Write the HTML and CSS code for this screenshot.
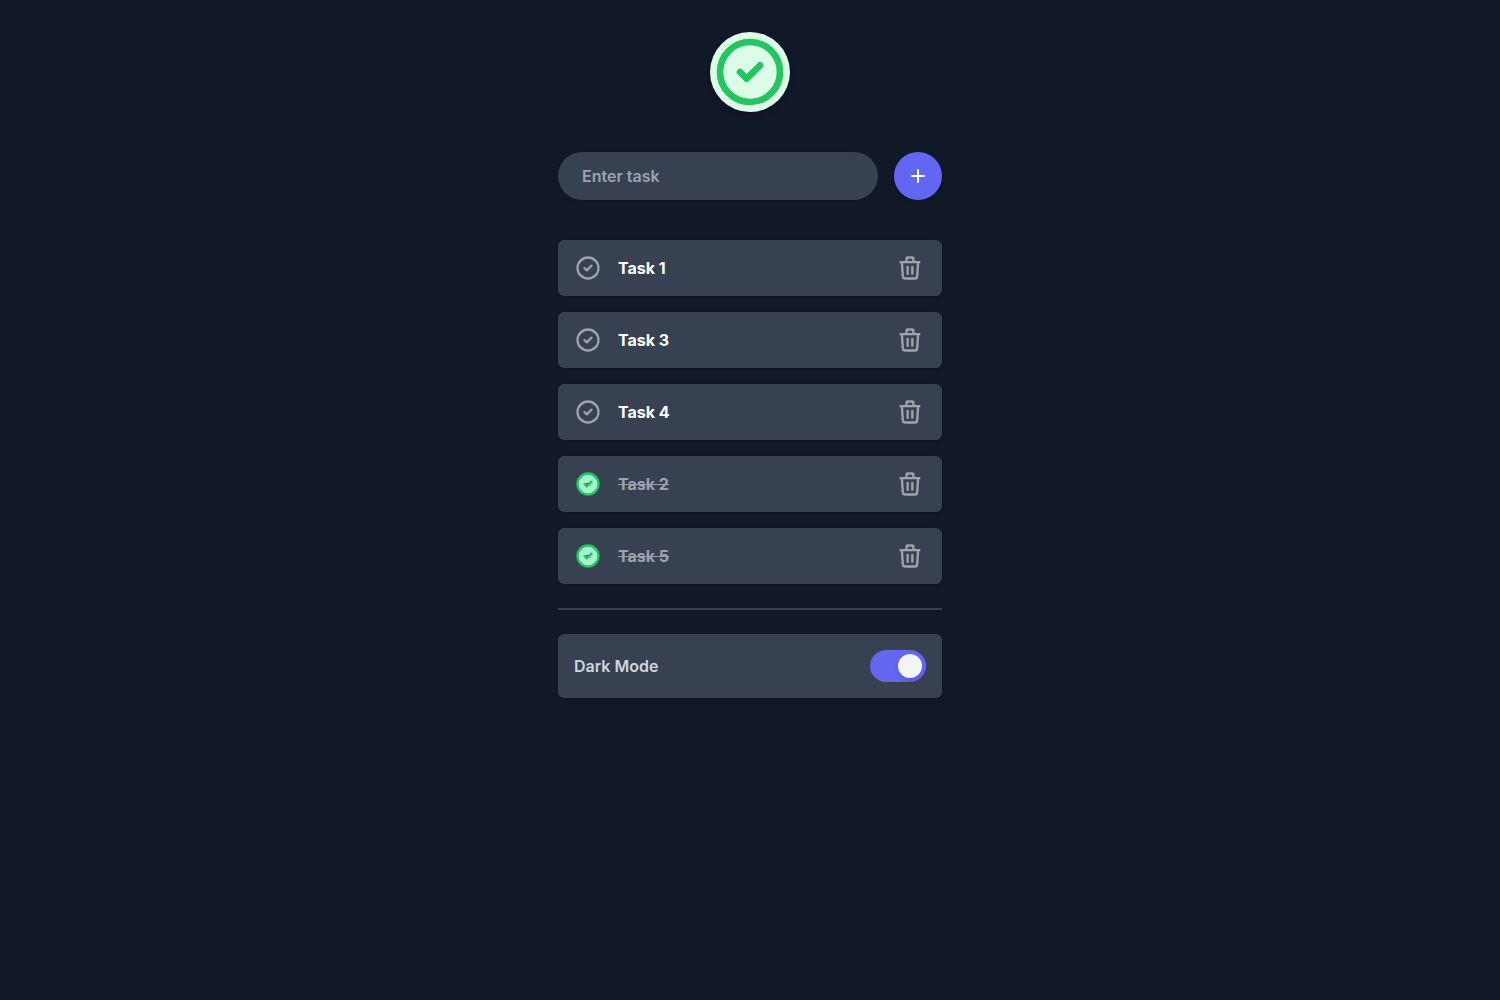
FILE: index.html
```html
<!DOCTYPE html>
<html lang="en">
<head>
<meta charset="utf-8">
<meta name="viewport" content="width=device-width, initial-scale=1">
<title>Tasks</title>
<link rel="stylesheet" href="styles.css">
</head>
<body>
<svg class="sprite" aria-hidden="true">
  <symbol id="check" viewBox="0 0 24 24"><path d="M9 12l2 2 4-4m6 2a9 9 0 11-18 0 9 9 0 0118 0z"/></symbol>
  <symbol id="trash" viewBox="0 0 24 24"><path d="M19 7l-.867 12.142A2 2 0 0116.138 21H7.862a2 2 0 01-1.995-1.858L5 7m5 4v6m4-6v6m1-10V4a1 1 0 00-1-1h-4a1 1 0 00-1 1v3M4 7h16"/></symbol>
</svg>
<main class="app">
  <header class="logo"><svg class="icon"><use href="#check"/></svg></header>
  <form class="new-task">
    <input class="task-input" type="text" placeholder="Enter task" aria-label="Enter task">
    <button class="add" type="button" aria-label="Add task">
      <svg class="plus" viewBox="0 0 20 20"><path d="M10 4v12M4 10h12"/></svg>
    </button>
  </form>
  <ul class="tasks">
    <li class="card task">
      <button class="toggle" type="button" aria-label="Complete Task 1"><svg class="icon"><use href="#check"/></svg></button>
      <span class="name">Task 1</span>
      <button class="delete" type="button" aria-label="Delete Task 1"><svg class="icon"><use href="#trash"/></svg></button>
    </li>
    <li class="card task">
      <button class="toggle" type="button" aria-label="Complete Task 3"><svg class="icon"><use href="#check"/></svg></button>
      <span class="name">Task 3</span>
      <button class="delete" type="button" aria-label="Delete Task 3"><svg class="icon"><use href="#trash"/></svg></button>
    </li>
    <li class="card task">
      <button class="toggle" type="button" aria-label="Complete Task 4"><svg class="icon"><use href="#check"/></svg></button>
      <span class="name">Task 4</span>
      <button class="delete" type="button" aria-label="Delete Task 4"><svg class="icon"><use href="#trash"/></svg></button>
    </li>
    <li class="card task done">
      <button class="toggle" type="button" aria-label="Reopen Task 2"><svg class="icon"><use href="#check"/></svg></button>
      <span class="name">Task 2</span>
      <button class="delete" type="button" aria-label="Delete Task 2"><svg class="icon"><use href="#trash"/></svg></button>
    </li>
    <li class="card task done">
      <button class="toggle" type="button" aria-label="Reopen Task 5"><svg class="icon"><use href="#check"/></svg></button>
      <span class="name">Task 5</span>
      <button class="delete" type="button" aria-label="Delete Task 5"><svg class="icon"><use href="#trash"/></svg></button>
    </li>
  </ul>
  <hr class="divider">
  <div class="card setting">
    <label for="dark-mode">Dark Mode</label>
    <input class="switch" id="dark-mode" type="checkbox" role="switch" checked>
  </div>
</main>
</body>
</html>
```
FILE: styles.css
```css
* {
  box-sizing: border-box;
}

body {
  margin: 0;
  background: #111827;
  color: #fff;
  font: 600 16px/24px Inter, "Liberation Sans", sans-serif;
}

button,
input {
  margin: 0;
  padding: 0;
  border: 0;
  font: inherit;
}

button {
  display: grid;
  place-items: center;
  background: none;
  color: #9ca3af;
  cursor: pointer;
}

svg {
  display: block;
  fill: none;
  stroke: currentColor;
  stroke-width: 2;
  stroke-linecap: round;
  stroke-linejoin: round;
}

.sprite {
  position: absolute;
  width: 0;
  height: 0;
}

.app {
  max-width: 416px;
  margin: 0 auto;
  padding: 32px 16px;
}

.logo {
  width: 80px;
  margin: 0 auto 40px;
  border-radius: 50%;
  background: #dcfce7;
  color: #22c55e;
  box-shadow: 0 4px 6px -1px rgb(0 0 0 / 0.1), 0 2px 4px -1px rgb(0 0 0 / 0.06);
}

.logo .icon {
  width: 100%;
  height: 80px;
}

.new-task {
  display: flex;
  gap: 16px;
  margin-bottom: 40px;
}

.task-input {
  flex: 1;
  min-width: 0;
  height: 48px;
  padding: 0 24px;
  border-radius: 24px;
  background: #374151;
  color: #fff;
  box-shadow: 0 1px 3px rgb(0 0 0 / 0.1), 0 1px 2px rgb(0 0 0 / 0.06);
}

.task-input::placeholder {
  color: #9ca3af;
  opacity: 1;
}

.add {
  width: 48px;
  height: 48px;
  border-radius: 50%;
  background: #6366f1;
  color: #fff;
  box-shadow: 0 1px 3px rgb(0 0 0 / 0.1), 0 1px 2px rgb(0 0 0 / 0.06);
}

.plus {
  width: 20px;
  height: 20px;
}

.tasks {
  display: grid;
  gap: 16px;
  margin: 0;
  padding: 0;
  list-style: none;
}

.card {
  display: flex;
  align-items: center;
  border-radius: 6px;
  background: #374151;
  box-shadow: 0 1px 3px rgb(0 0 0 / 0.1), 0 1px 2px rgb(0 0 0 / 0.06);
}

.task {
  gap: 16px;
  padding: 12px 16px;
}

.task .icon {
  width: 28px;
  height: 28px;
}

.name {
  flex: 1;
  font-weight: 700;
}

.delete {
  width: 32px;
  height: 32px;
}

.done .toggle {
  color: #22c55e;
}

.done .toggle .icon {
  fill: #a7f3d0;
}

.done .name {
  color: #9ca3af;
  text-decoration: line-through;
}

.divider {
  height: 2px;
  margin: 24px 0;
  border: 0;
  background: #374151;
}

.setting {
  justify-content: space-between;
  padding: 16px;
  color: #d1d5db;
}

.switch {
  display: flex;
  width: 56px;
  height: 32px;
  padding: 4px;
  border-radius: 16px;
  background: #9ca3af;
  appearance: none;
  cursor: pointer;
}

.switch::before {
  content: "";
  width: 24px;
  height: 24px;
  border-radius: 50%;
  background: #f3f4f6;
  box-shadow: 0 4px 6px -1px rgb(0 0 0 / 0.1), 0 2px 4px -1px rgb(0 0 0 / 0.06);
}

.switch:checked {
  justify-content: flex-end;
  background: #6366f1;
}
```
